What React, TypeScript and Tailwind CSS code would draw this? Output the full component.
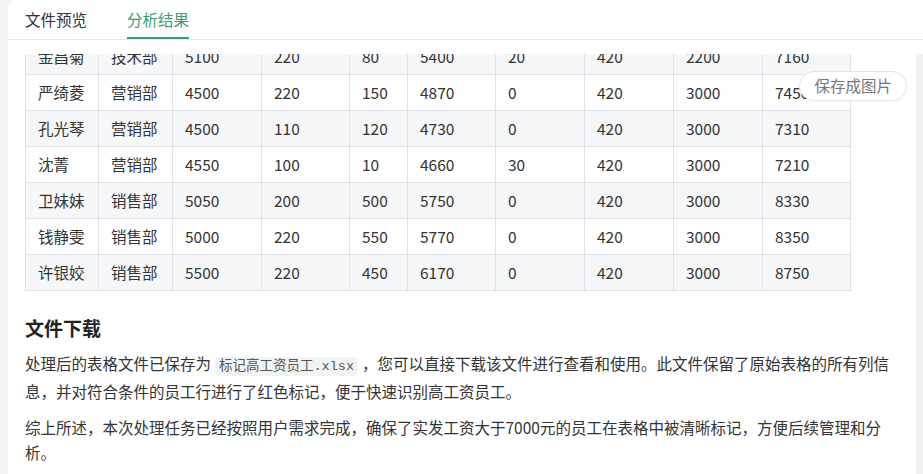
import React from 'react';

const rows = [
  ['金昌菊', '技术部', '5100', '220', '80', '5400', '20', '420', '2200', '7160'],
  ['严绮菱', '营销部', '4500', '220', '150', '4870', '0', '420', '3000', '7450'],
  ['孔光琴', '营销部', '4500', '110', '120', '4730', '0', '420', '3000', '7310'],
  ['沈菁', '营销部', '4550', '100', '10', '4660', '30', '420', '3000', '7210'],
  ['卫妹妹', '销售部', '5050', '200', '500', '5750', '0', '420', '3000', '8330'],
  ['钱静雯', '销售部', '5000', '220', '550', '5770', '0', '420', '3000', '8350'],
  ['许银姣', '销售部', '5500', '220', '450', '6170', '0', '420', '3000', '8750'],
];

const colClasses = [
  'w-[73px]',
  'w-[74px]',
  'w-[89px]',
  'w-[88px]',
  'w-[58px]',
  'w-[88px]',
  'w-[89px]',
  'w-[89px]',
  'w-[89px]',
  'w-[88px]',
];

const App: React.FC = () => {
  return (
    <div className="h-[474px] w-full bg-[#f3f3f3] pl-2 font-['Noto_Sans_CJK_SC',sans-serif] text-[#333]">
      <div className="relative flex h-full flex-col overflow-hidden rounded-tl-lg bg-white">
        {/* Tabs */}
        <div className="flex h-10 shrink-0 items-stretch gap-10 border-b border-[#e6e8eb] pl-[17px] text-[15.5px]">
          <button className="flex items-center text-[#333]">文件预览</button>
          <button className="relative flex items-center text-[#3d9c7c]">
            分析结果
            <span className="absolute bottom-0 left-0 right-0 h-[2px] bg-[#3d9c7c]" />
          </button>
        </div>

        <div className="flex min-h-0 flex-1 pt-[14px]">
          {/* result pane, scrolled a little past the top of the table */}
          <div className="min-w-0 flex-1 overflow-hidden pl-[17px] pr-[17px]">
            <table className="-mt-[16px] table-fixed border-collapse text-[15.5px]">
              <colgroup>
                {colClasses.map((c, i) => (
                  <col key={i} className={c} />
                ))}
              </colgroup>
              <tbody>
                {rows.map((r, i) => (
                  <tr key={i} className={i % 2 === 0 ? 'h-9 bg-[#f6f7f9]' : 'h-9 bg-white'}>
                    {r.map((cell, j) => (
                      <td key={j} className="border border-[#dfe2e6] px-3 leading-none whitespace-nowrap">
                        {cell}
                      </td>
                    ))}
                  </tr>
                ))}
              </tbody>
            </table>

            <h3 className="mt-[23px] text-[19px] font-bold leading-7 text-[#222]">文件下载</h3>

            <p className="mt-[9px] text-[15.5px] leading-[25px]">
              处理后的表格文件已保存为
              <code className="mx-1 rounded bg-[#f2f3f5] px-1 py-[2px] font-['Liberation_Mono','Noto_Sans_CJK_SC',monospace] text-[13.5px] text-[#555]">
                标记高工资员工.xlsx
              </code>
              ，您可以直接下载该文件进行查看和使用。此文件保留了原始表格的所有列信
              <br />
              息，并对符合条件的员工行进行了红色标记，便于快速识别高工资员工。
            </p>

            <p className="mt-[11px] text-[15.5px] leading-[25px]">
              综上所述，本次处理任务已经按照用户需求完成，确保了实发工资大于7000元的员工在表格中被清晰标记，方便后续管理和分
              <br />
              析。
            </p>
          </div>
          <div className="w-[7px] shrink-0 bg-[#f1f1f1]" />
        </div>

        {/* Floating action */}
        <button className="absolute right-4 top-[71px] flex h-[30px] items-center rounded-full border border-[#e3e5e8] bg-white px-[14px] text-[15.5px] text-[#777] shadow-[0_1px_3px_rgba(0,0,0,0.04)]">
          保存成图片
        </button>
      </div>
    </div>
  );
};

export default App;
